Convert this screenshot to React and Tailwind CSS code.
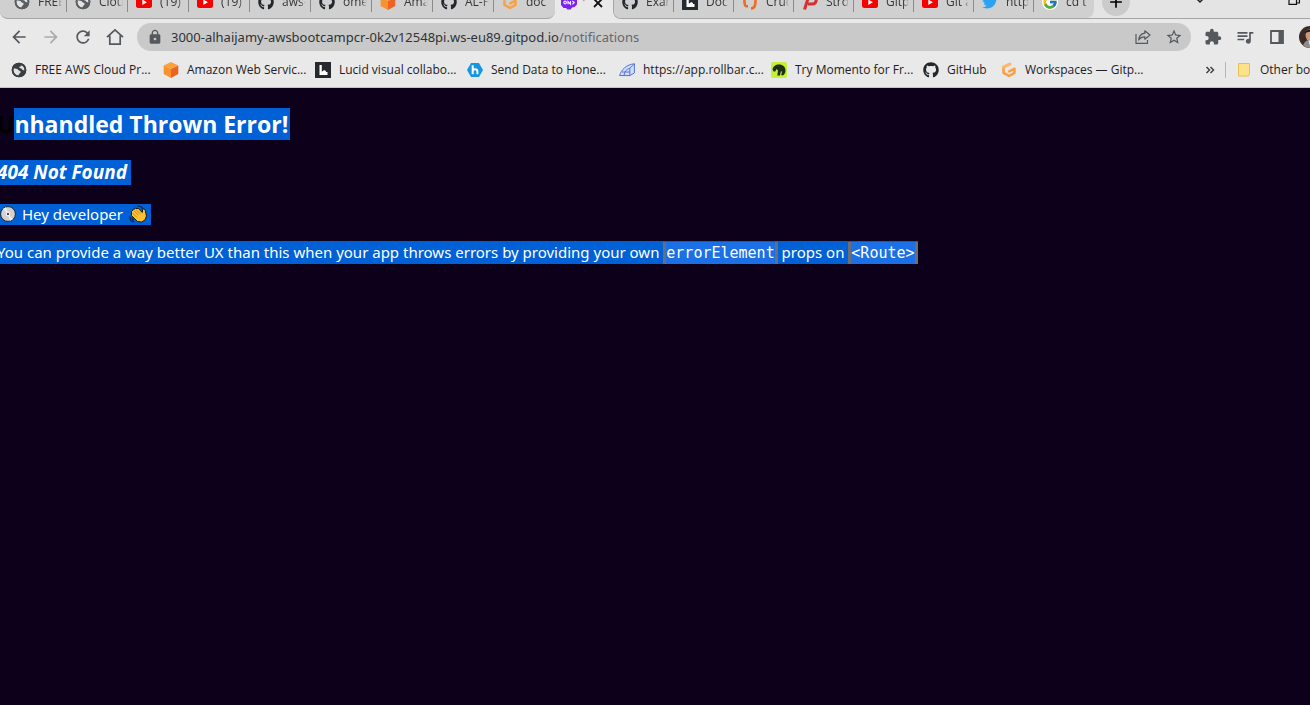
import React from "react";
import { FaGithub, FaTwitter } from "react-icons/fa";
import { FcGoogle } from "react-icons/fc";
import {
  MdArrowBack,
  MdArrowForward,
  MdRefresh,
  MdLock,
  MdStarBorder,
  MdExtension,
  MdQueueMusic,
  MdAdd,
} from "react-icons/md";

const Globe = ({ light }) => (
  <svg viewBox="0 0 16 16" className={light ? "size-4 shrink-0 text-[#5b5e62]" : "size-4 shrink-0 text-[#3b3e42]"} aria-hidden="true">
    <circle cx="8" cy="8" r="7.300" fill="currentColor" />
    <path d="M2.600 6.200l3.600.9c1 .3.900 1.500 2.100 1.600 1.600.1 1.700 2 .5 2.600-.8.400-.9 1.300-1.300 2.300-2.700-.2-4.800-2.300-5-4.900z" fill="#e2e2e2" />
    <path d="M8.200 2.600l2.500.6c-.3 1-1 1.200-2 1.300-.9.9-.3 1.700.8 1.700 1.300 0 1.400 1.200 2.200 1.700.6.300 1.200.2 1.800.3.100-1.900-.9-3.600-2.500-4.600z" fill="#e2e2e2" />
    <circle cx="8" cy="8" r="6.500" fill="none" stroke="currentColor" strokeWidth="1.600" />
  </svg>
);

const YouTube = () => (
  <svg viewBox="0 0 16 16" className="size-4 shrink-0" aria-hidden="true">
    <rect x="0" y="2" width="16" height="12" rx="2.500" fill="#f60000" />
    <path d="M6.300 5.500v5.400l4.600-2.700z" fill="#fff" />
  </svg>
);

const Cube = () => (
  <svg viewBox="0 0 16 16" className="size-4 shrink-0" aria-hidden="true">
    <path d="M8 0l7.300 3.600L8 7 .7 3.600z" fill="#f9a13d" />
    <path d="M.7 3.600L8 7v9L.7 12z" fill="#f9912c" />
    <path d="M15.300 3.600L8 7v9l7.300-4z" fill="#ec6423" />
  </svg>
);

const Lucid = () => (
  <svg viewBox="0 0 16 16" className="size-4 shrink-0" aria-hidden="true">
    <rect width="16" height="16" fill="#26292e" />
    <path d="M4.500 3h2.300v6.800l1.700-1.300c1.500-.7 2.500.2 2.500 1.500h1.500V13h-8z" fill="#fff" />
  </svg>
);

const Honeycomb = () => (
  <svg viewBox="0 0 16 16" className="size-4 shrink-0" aria-hidden="true">
    <path d="M4 1h8l4 7-4 7H4L0 8z" fill="#1496e4" />
    <path d="M5.700 3.300v8.900M5.700 9.400c0-3 4.700-3 4.700 0v2.800" fill="none" stroke="#fff" strokeWidth="2" />
  </svg>
);

const Rollbar = () => (
  <svg viewBox="0 0 16 16" className="size-4 shrink-0" fill="none" stroke="#5577dc" strokeWidth="1" strokeLinejoin="round" aria-hidden="true">
    <path d="M.6 13.500C2.500 7.500 7.500 2.500 15.400 1.800V11l-4.600 2.600z" fill="#d3dcf5" />
    <path d="M.6 13.500h10.200V6.300l4.600-4.500M10.800 6.300C7.500 7 5.500 9.500 5 13.500M3 10h7.800" />
  </svg>
);

const Momento = () => (
  <svg viewBox="0 0 16 16" className="size-4 shrink-0" aria-hidden="true">
    <rect width="16" height="16" rx="2" fill="#c4f135" />
    <path d="M1.500 7.500C2 4.500 4.500 2.500 8 2.500c4 0 6.500 2.500 6.500 6 0 2.300-1 4-2.500 5l-2-.4c1.200-1.600 1-3.300 0-4.300L9 13.500H6.300L7 8.500 5.500 7 4.300 9.500H2.500z" fill="#203018" />
  </svg>
);

const Gitpod = () => (
  <svg viewBox="0 0 16 16" className="size-4 shrink-0" fill="none" strokeLinecap="round" strokeLinejoin="round" strokeWidth="2.600" aria-hidden="true">
    <path d="M9 2L2.500 5.200v5.600L8 14l5.500-3.200V6.700L8.200 9.400" stroke="#f8a248" />
    <path d="M9 2L2.500 5.200" stroke="#fbb96a" />
  </svg>
);

const PurpleChat = () => (
  <svg viewBox="0 0 16 16" className="size-4 shrink-0" aria-hidden="true">
    <path d="M2 1h12l2 3v5.500L13.500 12l-2.500.5-1.500 2h-3L5 13H2.500L0 10V4z" fill="#7a22ee" />
    <path d="M2.800 7.500a1.300 1.300 0 1 0 2.600 0 1.300 1.300 0 1 0-2.600 0M7 9.300V6.500l2.500 2.800V6M11.300 6l2 1.600-2 1.700" fill="none" stroke="#f3e8ff" strokeWidth="1.200" />
  </svg>
);

const Bracket = () => (
  <svg viewBox="0 0 16 16" className="size-4 shrink-0" fill="none" stroke="#f26a21" strokeWidth="2.600" aria-hidden="true">
    <path d="M6 12.300H4.500C2.500 12 2.200 9 2.500 1.500M9 14.500c4-.5 4.800-2.500 4.500-13" />
  </svg>
);

const RedP = () => (
  <svg viewBox="0 0 16 16" className="size-4 shrink-0" fill="none" stroke="#d5302f" strokeWidth="3" aria-hidden="true">
    <path d="M2.500 15.500L6.500 3H12c3.500 0 2.800 7-1.500 7H6" />
  </svg>
);

const Github = () => <FaGithub className="size-4 shrink-0 text-[#24272c]" aria-hidden="true" />;

const leftTabs = [
  ["FREE", <Globe light />],
  ["Clou", <Globe light />],
  ["(19) A", <YouTube />],
  ["(19) A", <YouTube />],
  ["aws-", <Github />],
  ["ome", <Github />],
  ["Ama", <Cube />],
  ["AL-H", <Github />],
  ["doc", <Gitpod />],
];

const rightTabs = [
  ["Exam", <Github />],
  ["Doc", <Lucid />],
  ["Cruc", <Bracket />],
  ["Stro", <RedP />],
  ["Gitp", <YouTube />],
  ["Git a", <YouTube />],
  ["http", <FaTwitter className="size-4 shrink-0 text-[#2ba3f2]" aria-hidden="true" />],
  ["cd t", <FcGoogle className="size-4 shrink-0 rounded-full bg-white" aria-hidden="true" />],
];

function Tab({ label, icon, last, wide }) {
  return (
    <button
      type="button"
      role="tab"
      aria-selected="false"
      className={(wide ? "w-[61px]" : "w-[60px]") + " flex h-8 shrink-0 items-center pl-2 text-left"}
    >
      {icon}
      <span className="ml-2 mr-1 min-w-0 flex-1 overflow-hidden whitespace-nowrap [mask-image:linear-gradient(to_right,black_75%,transparent)]">
        {label}
      </span>
      <span className={last ? "h-5 w-px" : "h-5 w-px bg-[#8b8b8c]"} />
    </button>
  );
}

function TabStrip() {
  return (
    <div role="tablist" className="flex h-[19px] items-end overflow-hidden bg-[#e9e9e9] text-xs text-[#35363a]">
      <div className="flex shrink-0 rounded-b-lg border-b border-[#a5a5a6] bg-[#d0d0d0] pl-[6px]">
        {leftTabs.map(([label, icon], i) => (
          <Tab key={i} label={label} icon={icon} wide last={i === leftTabs.length - 1} />
        ))}
      </div>
      <div role="tab" aria-selected="true" className="flex h-[33px] w-[58px] shrink-0 items-center gap-[6px] pl-[6px]">
        <PurpleChat />
        <span className="w-1 shrink-0 overflow-hidden text-[#c98a3a]">‘</span>
        <button type="button" aria-label="Close tab">
          <svg viewBox="0 0 10 10" className="size-[10px]" fill="none" stroke="#111" strokeWidth="1.800" aria-hidden="true">
            <path d="M1 1l8 8M9 1L1 9" />
          </svg>
        </button>
      </div>
      <div className="flex min-w-0 flex-1 rounded-bl-lg border-b border-l border-[#a5a5a6] bg-[#e4e4e4]">
        <div className="flex shrink-0 rounded-b-lg bg-[#d0d0d0]">
          {rightTabs.map(([label, icon], i) => (
            <Tab key={i} label={label} icon={icon} last={i === rightTabs.length - 1} />
          ))}
        </div>
        <button type="button" aria-label="New tab" className="ml-2 mt-[2px] flex size-7 shrink-0 items-center justify-center rounded-full bg-[#cbcbcb]">
          <MdAdd className="size-5 text-black" />
        </button>
        <div className="ml-auto flex shrink-0 items-center gap-[82px] pr-[10px]">
          <svg viewBox="0 0 12 8" className="h-2 w-3 shrink-0" fill="none" stroke="#222" strokeWidth="1.500" aria-hidden="true">
            <path d="M2 0l4 4 4-4" />
          </svg>
          <svg viewBox="0 0 12 12" className="size-3 shrink-0" fill="none" stroke="#111" strokeWidth="1.200" aria-hidden="true">
            <path d="M1 2h7.500v6.400H1zM3.500 2V-1H11.400v8H8.500" />
          </svg>
        </div>
      </div>
    </div>
  );
}

const bookmarks = [
  ["FREE AWS Cloud Pr...", <Globe />],
  ["Amazon Web Servic...", <Cube />],
  ["Lucid visual collabo...", <Lucid />],
  ["Send Data to Hone...", <Honeycomb />],
  ["https://app.rollbar.c...", <Rollbar />],
  ["Try Momento for Fr...", <Momento />],
  ["GitHub", <Github />],
  ["Workspaces — Gitp...", <Gitpod />],
];

function Toolbar() {
  return (
    <div className="flex items-center bg-[#e9e9e9] py-1 text-[#55585c]">
      <div className="flex w-[137px] shrink-0 items-center gap-3 pl-[9px]">
        <button type="button" aria-label="Back"><MdArrowBack className="size-5" /></button>
        <button type="button" aria-label="Forward"><MdArrowForward className="size-5 text-[#a9aaac]" /></button>
        <button type="button" aria-label="Reload"><MdRefresh className="size-5" /></button>
        <button type="button" aria-label="Home">
          <svg viewBox="0 0 20 20" className="size-5" fill="none" stroke="currentColor" strokeWidth="1.700" aria-hidden="true">
            <path d="M2 10.200L10 2.800l8 7.400M4.800 8.500v8.700h10.400V8.500" />
          </svg>
        </button>
      </div>
      <div className="flex h-7 min-w-0 flex-1 items-center rounded-full bg-[#c9c9ca] pl-[10px] pr-2">
        <MdLock className="size-4 shrink-0" />
        <a href="#notifications" className="ml-2 min-w-0 flex-1 truncate pt-0.5 font-['Noto_Sans',sans-serif] text-[13px] text-[#2f3236]">
          3000-alhaijamy-awsbootcampcr-0k2v12548pi.ws-eu89.gitpod.io<span className="text-[#66686c]">/notifications</span>
        </a>
        <button type="button" aria-label="Share" className="mr-[14px]">
          <svg viewBox="0 0 16 16" className="size-4" fill="none" stroke="currentColor" strokeWidth="1.200" strokeLinejoin="round" aria-hidden="true">
            <path d="M1 5v9.300h11.500V11M9.800 1.800L15 6l-5.200 4.200V7.800C7 7.800 5 8.800 3.700 11c.3-3.600 2.300-6.200 6.100-6.800z" />
          </svg>
        </button>
        <button type="button" aria-label="Bookmark this tab"><MdStarBorder className="size-[18px]" /></button>
      </div>
      <div className="flex w-[119px] shrink-0 items-center gap-3 overflow-hidden pl-3">
        <button type="button" aria-label="Extensions" className="flex size-5 shrink-0 items-center justify-center"><MdExtension className="size-[18px]" /></button>
        <button type="button" aria-label="Media controls" className="shrink-0"><MdQueueMusic className="size-5" /></button>
        <button type="button" aria-label="Side panel" className="shrink-0">
          <svg viewBox="0 0 20 20" className="size-5" aria-hidden="true">
            <path d="M4 4h12v12H4z" fill="none" stroke="currentColor" strokeWidth="1.800" />
            <path d="M11.500 4H16v12h-4.500z" fill="currentColor" />
          </svg>
        </button>
        <button type="button" aria-label="Profile" className="shrink-0">
          <svg viewBox="0 0 22 22" className="size-[22px]" aria-hidden="true">
            <circle cx="11" cy="11" r="11" fill="#3c2c25" />
            <ellipse cx="11" cy="9" rx="4.500" ry="6" fill="#c79a80" />
            <path d="M6 8c0-6 10-6 10 0-2-3-8-3-10 0z" fill="#2a1d18" />
            <path d="M4 19c2-4 4-5 7-5s5 1 7 5c-4 4-10 4-14 0z" fill="#8d8d90" />
            <path d="M9.500 14.500h3L11 20z" fill="#eee" />
          </svg>
        </button>
      </div>
    </div>
  );
}

function BookmarkBar() {
  return (
    <div className="flex h-[33px] items-center border-b border-[#c4c4c4] bg-[#e9e9e9] pb-[3px] text-xs text-[#1f2023]">
      <nav aria-label="Bookmarks" className="flex min-w-0 flex-1 overflow-hidden pl-[11px]">
        {bookmarks.map(([label, icon]) => (
          <a key={label} href="#bookmark" className={(label === "GitHub" ? "w-[78px]" : "w-[152px]") + " flex shrink-0 items-center gap-2 whitespace-nowrap"}>
            {icon}
            {label}
          </a>
        ))}
      </nav>
      <div className="flex w-[105px] shrink-0 items-center overflow-hidden whitespace-nowrap">
        <button type="button" aria-label="More bookmarks" className="w-5 shrink-0">
          <svg viewBox="0 0 10 10" className="size-[10px]" fill="none" stroke="#444" strokeWidth="1.500" aria-hidden="true">
            <path d="M1.500 2l3 3-3 3M5.500 2l3 3-3 3" />
          </svg>
        </button>
        <span className="h-4 w-px shrink-0 bg-[#b5b5b6]" />
        <a href="#other" className="flex shrink-0 items-center gap-2 pl-[10px]">
          <svg viewBox="0 0 16 16" className="size-4 shrink-0" aria-hidden="true">
            <path d="M2.500 1.500h11v10l-1 2.500h-10z" fill="#fde289" stroke="#e8c04e" />
          </svg>
          Other bookmarks
        </a>
      </div>
    </div>
  );
}

const Disc = () => (
  <svg viewBox="0 0 16 16" className="mr-0.5 inline size-4 align-[-2px]" role="img" aria-label="Disc">
    <circle cx="8" cy="8" r="7.400" fill="#d2d0d0" stroke="#25252a" />
    <path d="M8 8L3 2.800 6 1.200zM8 8l5 5.200-3 1.600z" fill="#f0efef" />
    <circle cx="8" cy="8" r="2.200" fill="#f3f3f3" />
    <circle cx="8" cy="8" r="1" fill="#111" />
  </svg>
);

const Wave = () => (
  <svg viewBox="0 0 18 18" className="ml-0.5 inline size-[18px] align-[-3px]" role="img" aria-label="Waving hand">
    <path d="M2.500 6.500l1.200-1 .3-1.500 1.500.2 1-1.200 1.500.7 1.200-.5 4 4.300.5-3.200 1.500-.5 1 1.500 1.300 5.700-1.500 4-3.500 2-4-.5-6-6z" fill="#fcc233" stroke="#1d1a14" strokeWidth="1" strokeLinejoin="round" />
    <path d="M4.800 5.500l4.500 4.700M7 4.500l4.500 4.700M3.500 8l4.500 4.500" stroke="#b9790d" strokeWidth=".8" />
    <path d="M8.500 1.200c2.500-.7 4.500.6 5 2.800M.9 11.500c-.2 3 1.500 5.300 4.300 5.300M2.700 12.500c.3 1.300 1 2.200 2.200 2.600" fill="none" stroke="#14202c" strokeWidth="1.200" />
  </svg>
);

function Code({ children }) {
  return (
    <code className="inline-block bg-[#6b6d78] px-[3px] font-['DejaVu_Sans_Mono',monospace] text-[15px] leading-[22px]">
      <span className="block bg-[#1a70e4]">{children}</span>
    </code>
  );
}

export default function App() {
  return (
    <div className="flex min-h-screen flex-col overflow-hidden bg-[#0d001a] font-['Open_Sans','Noto_Sans',sans-serif]">
      <header>
        <TabStrip />
        <Toolbar />
        <BookmarkBar />
      </header>
      <main className="-ml-[3px] flex flex-col items-start whitespace-nowrap pt-5 font-['Noto_Sans',sans-serif] text-white">
        <h2 className="font-['Open_Sans',sans-serif] text-[23px] font-bold leading-8">
          <span className="text-black">U</span>
          <span className="inline-block bg-[#0060d6] pr-0.5">nhandled Thrown Error!</span>
        </h2>
        <h3 className="mt-5 bg-[#0060d6] pr-1 font-['Open_Sans',sans-serif] text-[19px] font-bold italic leading-[25px]">404 Not Found</h3>
        <p className="mt-[19px] bg-[#0060d6] pl-[3px] pr-1 text-[15px] leading-[21px]">
          <Disc /> Hey developer <Wave />
        </p>
        <p className="mt-4 bg-[#0060d6] text-[15px] leading-[22px]">
          You can provide a way better UX than this when your app throws errors by providing your own <Code>errorElement</Code> props on <Code>&lt;Route&gt;</Code>
        </p>
      </main>
    </div>
  );
}
